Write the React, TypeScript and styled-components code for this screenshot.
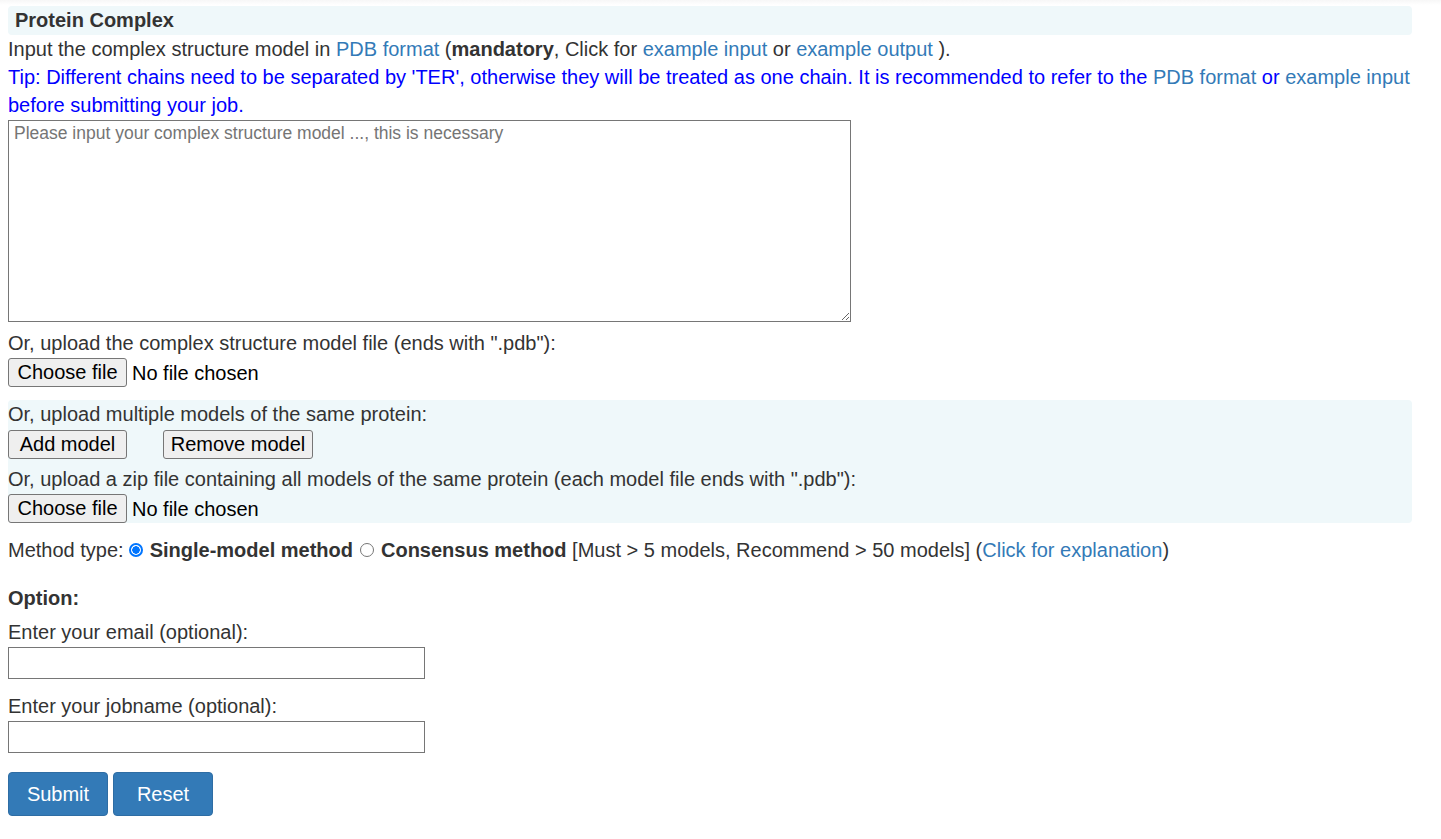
import React from "react";
import styled, { createGlobalStyle } from "styled-components";

const Global = createGlobalStyle`
  html, body { margin: 0; padding: 0; }
  body {
    padding: 0 8px;
    background: linear-gradient(#f7f7f7, #ffffff 5px) no-repeat #fff;
    font-family: "Liberation Sans", Arial, sans-serif;
    font-size: 20px;
    line-height: 28px;
    color: #333;
  }
`;

const Page = styled.div`
  width: 1404px;
  padding-top: 6px;
`;

const Header = styled.div`
  background: #eff8fa;
  border-radius: 4px;
  height: 29px;
  line-height: 28px;
  padding-left: 7px;
  font-weight: bold;
`;

const Line = styled.div<{ $color?: string; $mt?: number }>`
  color: ${(p) => p.$color || "#333"};
  line-height: 28px;
  margin-top: ${(p) => p.$mt || 0}px;
`;

const Link = styled.a`
  color: #337ab7;
  text-decoration: none;
`;

const TextArea = styled.textarea`
  display: block;
  box-sizing: border-box;
  width: 843px;
  height: 202px;
  margin: 1px 0 0;
  padding: 2px 5px;
  border: 1px solid #767676;
  border-radius: 0;
  font-family: "Liberation Sans", Arial, sans-serif;
  font-size: 17.5px;
  color: #333;
  &::placeholder { color: #757575; }
`;

const FileRow = styled.div`
  display: flex;
  align-items: center;
  height: 29px;
  margin-top: 1px;
  gap: 5px;
`;

const GrayButton = styled.button<{ $w: number }>`
  box-sizing: border-box;
  width: ${(p) => p.$w}px;
  height: 29px;
  padding: 0;
  border: 1px solid #767676;
  border-radius: 3px;
  background: #efefef;
  font-family: "Liberation Sans", Arial, sans-serif;
  font-size: 20px;
  line-height: 27px;
  color: #000;
`;

const NoFile = styled.span`
  color: #000;
`;

const Section = styled.div`
  margin-top: 7px;
`;

const Band = styled.div`
  background: #eff8fa;
  border-radius: 4px;
  margin-top: 13px;
`;

const ButtonRow = styled.div`
  display: flex;
  align-items: center;
  gap: 36px;
  height: 29px;
  margin-top: 2px;
`;

const Method = styled.div`
  margin-top: 13px;
  display: flex;
  align-items: center;
  line-height: 28px;
  white-space: pre;
`;

const Radio = styled.span<{ $on?: boolean; $ml: number }>`
  display: inline-block;
  box-sizing: border-box;
  width: 14px;
  height: 14px;
  border-radius: 50%;
  margin: 0 7px 0 ${(p) => p.$ml}px;
  border: ${(p) => (p.$on ? "2px solid #0075ff" : "1px solid #767676")};
  background: ${(p) =>
    p.$on ? "radial-gradient(circle, #0075ff 0 3.5px, #fff 4px)" : "#fff"};
`;

const Bold = styled.b``;

const OptionTitle = styled.div`
  margin-top: 20px;
  font-weight: bold;
`;

const Label = styled.div<{ $mt: number }>`
  margin-top: ${(p) => p.$mt}px;
`;

const TextInput = styled.input`
  display: block;
  box-sizing: border-box;
  width: 417px;
  height: 32px;
  margin: 1px 0 0;
  border: 1px solid #767676;
  border-radius: 0;
  font-size: 16px;
`;

const Actions = styled.div`
  margin-top: 19px;
  display: flex;
  gap: 5px;
`;

const PrimaryButton = styled.button`
  box-sizing: border-box;
  width: 100px;
  height: 44px;
  border: 1px solid #2e6da4;
  border-radius: 4px;
  background: #337ab7;
  color: #fff;
  font-family: "Liberation Sans", Arial, sans-serif;
  font-size: 20px;
  padding: 0;
`;

export default function App() {
  return (
    <Page>
      <Global />
      <Header>Protein Complex</Header>
      <Line>
        Input the complex structure model in <Link href="#">PDB format</Link> (
        <Bold>mandatory</Bold>, Click for <Link href="#">example input</Link> or{" "}
        <Link href="#">example output</Link> ).
      </Line>
      <Line $color="#0000ff">
        Tip: Different chains need to be separated by 'TER', otherwise they will be
        treated as one chain. It is recommended to refer to the{" "}
        <Link href="#">PDB format</Link> or <Link href="#">example input</Link>{" "}
        before submitting your job.
      </Line>
      <TextArea placeholder="Please input your complex structure model ..., this is necessary" />
      <Section>
        <Line>Or, upload the complex structure model file (ends with ".pdb"):</Line>
        <FileRow>
          <GrayButton $w={119}>Choose file</GrayButton>
          <NoFile>No file chosen</NoFile>
        </FileRow>
      </Section>
      <Band>
        <Line>Or, upload multiple models of the same protein:</Line>
        <ButtonRow>
          <GrayButton $w={119}>Add model</GrayButton>
          <GrayButton $w={150}>Remove model</GrayButton>
        </ButtonRow>
        <Line $mt={6}>
          Or, upload a zip file containing all models of the same protein (each model
          file ends with ".pdb"):
        </Line>
        <FileRow>
          <GrayButton $w={119}>Choose file</GrayButton>
          <NoFile>No file chosen</NoFile>
        </FileRow>
      </Band>
      <Method>
        Method type:
        <Radio $on $ml={5} />
        <Bold>Single-model method</Bold>
        <Radio $ml={7} />
        <Bold>Consensus method</Bold> [Must &gt; 5 models, Recommend &gt; 50 models] (
        <Link href="#">Click for explanation</Link>)
      </Method>
      <OptionTitle>Option:</OptionTitle>
      <Label $mt={6}>Enter your email (optional):</Label>
      <TextInput />
      <Label $mt={13}>Enter your jobname (optional):</Label>
      <TextInput />
      <Actions>
        <PrimaryButton>Submit</PrimaryButton>
        <PrimaryButton>Reset</PrimaryButton>
      </Actions>
    </Page>
  );
}
